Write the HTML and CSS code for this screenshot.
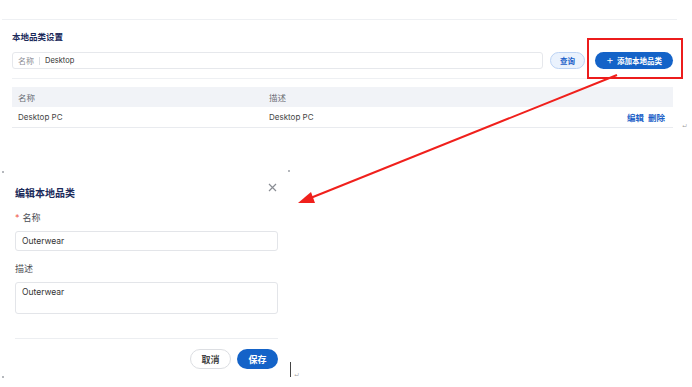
FILE: index.html
```html
<!DOCTYPE html>
<html lang="zh">
<head>
<meta charset="utf-8">
<link rel="stylesheet" href="styles.css">
</head>
<body>
<div class="page">
  <div class="top-rule"></div>
  <section class="panel">
    <h2 class="panel-title">本地品类设置</h2>
    <div class="search-row">
      <div class="search-box">
        <span class="search-label">名称</span>
        <span class="search-sep"></span>
        <span class="search-value">Desktop</span>
      </div>
      <button class="btn-query">查询</button>
      <button class="btn-add"><span class="plus">+</span>添加本地品类</button>
    </div>
    <div class="rule"></div>
    <div class="table">
      <div class="thead">
        <span class="col-name">名称</span>
        <span class="col-desc">描述</span>
      </div>
      <div class="trow">
        <span class="col-name">Desktop PC</span>
        <span class="col-desc">Desktop PC</span>
        <span class="col-ops"><a>编辑</a><a>删除</a></span>
      </div>
    </div>
  </section>

  <section class="dialog-wrap">
    <span class="corner c-tl"></span>
    <span class="corner c-tr"></span>
    <span class="corner c-bl"></span>
    <div class="dialog">
      <div class="dialog-head">
        <h3 class="dialog-title">编辑本地品类</h3>
        <span class="close">
          <svg width="9" height="9" viewBox="0 0 9 9"><path d="M1 1L8 8M8 1L1 8" stroke="#8a8d94" stroke-width="1.2" fill="none"/></svg>
        </span>
      </div>
      <label class="field-label"><span class="req">*</span>名称</label>
      <div class="input">Outerwear</div>
      <label class="field-label">描述</label>
      <div class="textarea">Outerwear</div>
      <div class="dialog-rule"></div>
      <div class="dialog-foot">
        <button class="btn-cancel">取消</button>
        <button class="btn-save">保存</button>
      </div>
    </div>
    <span class="caret"></span>
    <span class="para-mark pm-dialog">↵</span>
  </section>

  <span class="para-mark pm-table">↵</span>
  <div class="red-box"></div>
  <svg class="arrow" width="692" height="387" viewBox="0 0 692 387">
    <line x1="617" y1="75" x2="308" y2="199" stroke="#f0201c" stroke-width="2"/>
    <polygon points="298,203 311,192 315,203" fill="#f0201c"/>
  </svg>
</div>
</body>
</html>
```

FILE: styles.css
```css
* { box-sizing: border-box; }
html, body { margin: 0; padding: 0; background: #ffffff; }
body {
  font-family: "Inter", "Noto Sans CJK SC", sans-serif;
  color: #333;
  width: 692px;
  height: 387px;
  overflow: hidden;
}
.page { position: relative; width: 692px; height: 387px; padding-top: 19px; }

.top-rule { margin-left: 2px; width: 675px; height: 1px; background: #eef0f3; }

.panel { margin-left: 12px; width: 661px; }
.panel-title {
  margin: 11px 0 0 0;
  font-size: 8.5px;
  line-height: 12px;
  font-weight: 700;
  color: #1b2a5a;
}
.search-row { display: flex; align-items: center; margin-top: 9px; height: 17px; }
.search-box {
  width: 531px;
  height: 17px;
  border: 1px solid #e6e8ec;
  border-radius: 3px;
  display: flex;
  align-items: center;
  padding-left: 5px;
  font-size: 7.5px;
}
.search-label { color: #8a8d94; font-size: 8px; }
.search-sep { width: 1px; height: 8px; background: #dcdfe4; margin: 0 5px 0 5px; }
.search-value { color: #333; }
.btn-query {
  margin-left: 7px;
  width: 35px;
  height: 17px;
  border-radius: 9px;
  border: 1px solid #bcd3f4;
  background: #eaf2fd;
  color: #1a5fc8;
  font: 700 7.5px "Inter", "Noto Sans CJK SC", sans-serif;
  padding: 0;
}
.btn-add {
  margin-left: 10px;
  width: 78px;
  height: 17px;
  border-radius: 9px;
  border: none;
  background: #1463c8;
  color: #fff;
  font: 700 7.5px "Inter", "Noto Sans CJK SC", sans-serif;
  padding: 0;
  display: flex;
  align-items: center;
  justify-content: center;
}
.plus { font-size: 12px; font-weight: 300; margin-right: 3px; line-height: 1; margin-top: -1px; }
.rule { margin-top: 9px; height: 1px; background: #eef0f3; }

.table { margin-top: 8px; font-size: 8px; }
.thead, .trow { display: flex; align-items: center; height: 20px; padding-left: 6px; }
.thead { background: #f1f3f7; color: #6b6e75; font-size: 8.5px; }
.trow { height: 21px; border-bottom: 1px solid #e9ebef; color: #444; }
.col-name { width: 251px; }
.col-desc { flex: 1; }
.col-ops { display: flex; gap: 4px; padding-right: 8px; font-size: 8.5px; }
.col-ops a { color: #1a5fc8; font-weight: 700; }

.dialog-wrap { position: relative; margin-top: 42px; margin-left: 2px; width: 288px; height: 208px; }
.corner { position: absolute; width: 2px; height: 2px; background: #b5b8bd; }
.c-tl { left: 0; top: 1px; }
.c-tr { left: 286px; top: 0; }
.c-bl { left: 0; top: 206px; }
.dialog { margin-left: 13px; width: 263px; padding-top: 16px; }
.dialog-head { display: flex; justify-content: space-between; align-items: flex-start; height: 14px; }
.dialog-title { margin: 0; font-size: 10px; line-height: 14px; font-weight: 700; color: #1b2a5a; }
.close { margin-top: -3px; margin-right: 1px; display: flex; }
.field-label { display: block; margin-top: 12px; font-size: 9px; line-height: 12px; color: #4a4d54; }
.req { color: #f05a4a; margin-right: 3px; }
.input, .textarea {
  margin-top: 7px;
  border: 1px solid #e3e5e9;
  border-radius: 3px;
  font-size: 8.5px;
  color: #333;
  padding-left: 6px;
}
.input { height: 20px; line-height: 18px; }
.textarea { height: 32px; padding-top: 3px; line-height: 12px; }
.dialog-rule { margin-top: 24px; height: 1px; background: #eceef1; }
.dialog-foot { display: flex; justify-content: flex-end; gap: 6px; margin-top: 10px; }
.btn-cancel, .btn-save {
  width: 41px;
  height: 20px;
  border-radius: 10px;
  font: 700 9px "Inter", "Noto Sans CJK SC", sans-serif;
  padding: 0;
}
.btn-cancel { background: #fff; border: 1px solid #dcdee2; color: #444; }
.btn-save { background: #1463c8; border: none; color: #fff; }

.caret { position: absolute; left: 288px; top: 192px; width: 1px; height: 15px; background: #444; }
.para-mark { position: absolute; font-size: 5px; color: #999; line-height: 1; }
.pm-dialog { left: 292px; top: 203px; }
.pm-table { left: 682px; top: 124px; }

.red-box {
  position: absolute;
  left: 587px;
  top: 38px;
  width: 96px;
  height: 41px;
  border: 2px solid #ec1c1c;
}
.arrow { position: absolute; left: 0; top: 0; pointer-events: none; }
```
